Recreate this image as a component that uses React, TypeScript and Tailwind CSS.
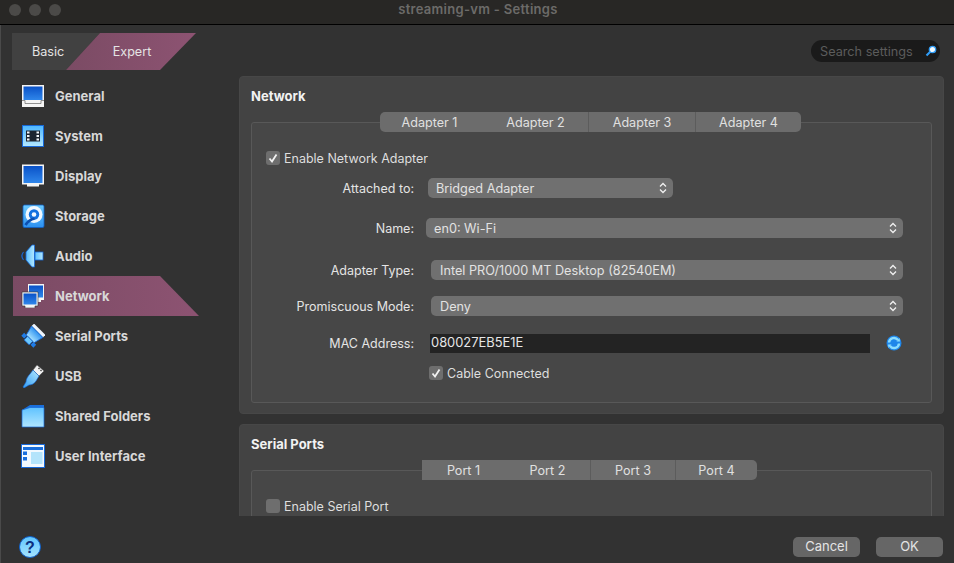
import type { ReactNode } from "react";

const font = { fontFamily: "Inter, 'Liberation Sans', sans-serif" };

function GeneralIcon() {
  return (
    <svg width="24" height="24" viewBox="0 0 24 24">
      <defs>
        <linearGradient id="scr" x1="0" y1="0" x2="0" y2="1">
          <stop offset="0" stopColor="#0a52c8" />
          <stop offset="1" stopColor="#2f86ea" />
        </linearGradient>
      </defs>
      <rect x="1" y="1" width="22" height="22" fill="#f4f4f4" />
      <rect x="2.500" y="2.500" width="19" height="13.500" fill="url(#scr)" />
      <path d="M1 16.500h3v3h16v-3h3" fill="none" stroke="#777" strokeWidth="0.8" />
    </svg>
  );
}

function SystemIcon() {
  return (
    <svg width="24" height="24" viewBox="0 0 24 24">
      <defs>
        <linearGradient id="sys" x1="0" y1="0" x2="0" y2="1">
          <stop offset="0" stopColor="#4cb6ff" />
          <stop offset="1" stopColor="#b4e8ff" />
        </linearGradient>
      </defs>
      <rect x="1.500" y="1.500" width="21" height="21" fill="url(#sys)" stroke="#1668d8" />
      <rect x="5" y="6.500" width="14" height="11" fill="#1c2430" />
      <path d="M6 7.500h2.500v2H6zM6 11h2.500v2H6zM6 14.500h2.500v2H6zM15.500 7.500H18v2h-2.500zM15.500 11H18v2h-2.500zM15.500 14.500H18v2h-2.500z" fill="#f2f6fa" />
    </svg>
  );
}

function DisplayIcon() {
  return (
    <svg width="24" height="24" viewBox="0 0 24 24">
      <path d="M1 0.500h22v20h-5v2H6v-2H1z" fill="#f4f4f4" />
      <rect x="2.500" y="2" width="19" height="17" fill="url(#scr)" />
    </svg>
  );
}

function StorageIcon() {
  return (
    <svg width="24" height="24" viewBox="0 0 24 24">
      <defs>
        <linearGradient id="sto" x1="0" y1="0" x2="0" y2="1">
          <stop offset="0" stopColor="#6ccbff" />
          <stop offset="1" stopColor="#2c90f0" />
        </linearGradient>
      </defs>
      <rect x="2" y="1" width="21" height="22.500" rx="1.500" fill="url(#sto)" stroke="#0f5fc8" strokeWidth="0.8" />
      <circle cx="13" cy="10.500" r="8.500" fill="#f0f8ff" />
      <circle cx="13" cy="10.500" r="5.200" fill="#1170e0" />
      <circle cx="13" cy="10.500" r="2.300" fill="#f0f8ff" />
      <path d="M4.500 21c2.500-4 5-5.500 9-6.500" fill="none" stroke="#0c4fb0" strokeWidth="2.800" />
    </svg>
  );
}

function AudioIcon() {
  return (
    <svg width="24" height="24" viewBox="0 0 24 24">
      <defs>
        <linearGradient id="aud" x1="0" y1="0" x2="1" y2="0">
          <stop offset="0" stopColor="#5cc0ff" />
          <stop offset="1" stopColor="#b4e8ff" />
        </linearGradient>
      </defs>
      <path d="M5 8l6-7h2.500v22H11l-6-7z" fill="url(#aud)" stroke="#1668d8" strokeWidth="0.8" />
      <rect x="14" y="8" width="8" height="8" fill="url(#aud)" stroke="#1668d8" strokeWidth="0.8" />
      <path d="M2.500 8c-2 2.500-2 5.500 0 8" fill="none" stroke="#1668d8" strokeWidth="1.200" />
    </svg>
  );
}

function NetworkIcon() {
  return (
    <svg width="24" height="24" viewBox="0 0 24 24">
      <path d="M7 0h16v16h-3v2H7z" fill="#f4f4f4" />
      <rect x="8" y="1.500" width="14" height="12" fill="url(#scr)" />
      <path d="M1 8h16v14h-3v2H4v-2H1z" fill="#f4f4f4" stroke="#333" strokeWidth="0.6" />
      <rect x="2.500" y="9.500" width="13" height="11" fill="url(#scr)" />
    </svg>
  );
}

function SerialIcon() {
  return (
    <svg width="24" height="24" viewBox="0 0 24 24">
      <defs>
        <linearGradient id="ser" x1="0" y1="0" x2="0" y2="1">
          <stop offset="0" stopColor="#2f92f0" />
          <stop offset="1" stopColor="#a8e2ff" />
        </linearGradient>
      </defs>
      <g transform="rotate(45 12 12)">
        <rect x="4" y="2.500" width="16" height="3.500" fill="#eef4fa" />
        <path d="M4 6h16l-2.500 10h-11z" fill="url(#ser)" stroke="#1668d8" strokeWidth="0.8" />
        <rect x="8.500" y="16" width="7" height="5" fill="#6cc8ff" stroke="#1668d8" strokeWidth="0.8" />
        <rect x="3.500" y="16" width="4" height="4" fill="#1f7ce8" />
        <rect x="16.500" y="16" width="4" height="4" fill="#1f7ce8" />
      </g>
    </svg>
  );
}

function UsbIcon() {
  return (
    <svg width="24" height="24" viewBox="0 0 24 24">
      <defs>
        <linearGradient id="usb" x1="0" y1="1" x2="1" y2="0">
          <stop offset="0" stopColor="#2f9cf5" />
          <stop offset="1" stopColor="#b4e8ff" />
        </linearGradient>
      </defs>
      <path d="M16 1l7 6-5 5-6-6z" fill="#f2f2f2" stroke="#555" strokeWidth="0.6" />
      <path d="M17.500 4l1 1M19.500 6l1 1" stroke="#333" strokeWidth="1.200" />
      <path d="M12 6l6 6-3 5c-2 3-5 4-7 4l-5 3-1-1 3-5c0-3 2-6 4-8z" fill="url(#usb)" stroke="#1668d8" strokeWidth="0.6" />
    </svg>
  );
}

function FolderIcon() {
  return (
    <svg width="24" height="24" viewBox="0 0 24 24">
      <defs>
        <linearGradient id="fol" x1="0" y1="0" x2="0" y2="1">
          <stop offset="0" stopColor="#5fc2ff" />
          <stop offset="1" stopColor="#b0e6ff" />
        </linearGradient>
      </defs>
      <path d="M1 6l8-5h14v5z" fill="#1a6fdc" />
      <path d="M1 6l8-2.500h14V23H1z" fill="url(#fol)" stroke="#1668d8" strokeWidth="0.7" />
    </svg>
  );
}

function InterfaceIcon() {
  return (
    <svg width="24" height="24" viewBox="0 0 24 24">
      <rect x="0.500" y="0.500" width="23" height="23" fill="#f2f9ff" stroke="#1668d8" />
      <rect x="2" y="3" width="20" height="3" fill="#1a6fdc" />
      <rect x="2" y="7.500" width="4" height="3.500" fill="#1a6fdc" />
      <rect x="2" y="13" width="4" height="3.500" fill="#1a6fdc" />
      <rect x="10" y="8" width="11.500" height="12" fill="#b4e4fb" />
    </svg>
  );
}

const sections: { name: string; icon: ReactNode; active?: boolean }[] = [
  { name: "General", icon: <GeneralIcon /> },
  { name: "System", icon: <SystemIcon /> },
  { name: "Display", icon: <DisplayIcon /> },
  { name: "Storage", icon: <StorageIcon /> },
  { name: "Audio", icon: <AudioIcon /> },
  { name: "Network", icon: <NetworkIcon />, active: true },
  { name: "Serial Ports", icon: <SerialIcon /> },
  { name: "USB", icon: <UsbIcon /> },
  { name: "Shared Folders", icon: <FolderIcon /> },
  { name: "User Interface", icon: <InterfaceIcon /> },
];

function Chevrons() {
  return (
    <svg width="8" height="12" viewBox="0 0 8 12" className="shrink-0" fill="none" stroke="#f0f0f0" strokeWidth="1.300">
      <path d="M1 4.500L4 1.500l3 3M1 7.500l3 3 3-3" />
    </svg>
  );
}

function Select({ value, className }: { value: string; className: string }) {
  return (
    <div className={`flex h-5 items-center justify-between rounded-[5px] bg-[#707070] pr-[6px] text-[12.7px] text-[#e2e2e2] ${className}`}>
      <span className="pt-[2px]">{value}</span>
      <Chevrons />
    </div>
  );
}

function Checkbox({ label, checked }: { label: string; checked?: boolean }) {
  return (
    <div className="flex h-5 items-center gap-[4px] text-[12.5px] text-[#dedede]">
      <span className="flex h-[14px] w-[14px] items-center justify-center rounded-[3px] bg-[#6e6e6e]">
        {checked && (
          <svg width="10" height="10" viewBox="0 0 10 10" fill="none" stroke="#f2f2f2" strokeWidth="1.800">
            <path d="M1.500 5.500L4 8.500 8.500 1.500" />
          </svg>
        )}
      </span>
      <span className="pt-[2px]">{label}</span>
    </div>
  );
}

function Tabs({ items, className }: { items: { name: string; width: string; sep?: boolean }[]; className: string }) {
  return (
    <div className={`relative z-10 flex h-5 rounded-[5px] bg-[#6c6c6c] text-[12.6px] text-[#e0e0e0] ${className}`}>
      {items.map((t) => (
        <div key={t.name} className={`flex items-center justify-center pt-[2px] ${t.width} ${t.sep ? "border-l border-[#5c5c5c]" : ""}`}>
          {t.name}
        </div>
      ))}
    </div>
  );
}

function Row({ label, className, children }: { label: string; className: string; children: ReactNode }) {
  return (
    <div className={`flex h-5 items-center ${className}`}>
      <div className="w-[162px] translate-y-[1px] text-right text-[12.5px] text-[#e4e4e4]">{label}</div>
      {children}
    </div>
  );
}

export default function App() {
  return (
    <div className="flex h-[563px] w-[954px] flex-col overflow-hidden bg-[#323232]" style={font}>
      {/* Title bar */}
      <div className="relative flex h-[25px] shrink-0 items-center justify-center border-b border-black bg-[#282725] pb-[5px] pl-[2px]">
        <div className="absolute top-[4px] left-[9px] flex gap-[8px]">
          <span className="h-3 w-3 rounded-full bg-[#4b4a48]" />
          <span className="h-3 w-3 rounded-full bg-[#4b4a48]" />
          <span className="h-3 w-3 rounded-full bg-[#4b4a48]" />
        </div>
        <span className="text-[13px] font-semibold tracking-[0.3px] text-[#6c6b69]">streaming-vm - Settings</span>
      </div>

      <div className="flex min-h-0 flex-1 border-l border-[#4a4a4a]">
        {/* Sidebar */}
        <div className="flex w-[238px] shrink-0 flex-col">
          <div className="mt-2 ml-[11px] flex h-[37px] text-[12.6px] text-[#e4e4e4]">
            <div className="flex w-[88px] items-center bg-[#414141] pt-[2px] pl-5 [clip-path:polygon(0_0,100%_0,54px_100%,0_100%)]">Basic</div>
            <div className="-ml-[34px] flex w-[130px] items-center justify-center bg-gradient-to-r from-[#7b4b64] to-[#8d5372] pt-[2px] pl-[2px] [clip-path:polygon(34px_0,100%_0,94px_100%,0_100%)]">
              Expert
            </div>
          </div>
          <div className="mt-[6px] flex flex-col">
            {sections.map((s) => (
              <div
                key={s.name}
                className={`ml-3 flex h-10 w-[186px] items-center gap-[10px] pl-2 text-[13px] font-bold text-[#d8d8d8] ${
                  s.active ? "bg-gradient-to-r from-[#7b4b64] to-[#8d5372] [clip-path:polygon(0_0,147px_0,100%_100%,0_100%)]" : ""
                }`}
              >
                {s.icon}
                <span className="translate-y-[1px]">{s.name}</span>
              </div>
            ))}
          </div>
          <div className="mt-auto mb-[5px] ml-[18px]">
            <svg width="22" height="22" viewBox="0 0 22 22">
              <defs>
                <linearGradient id="help" x1="0" y1="0" x2="0" y2="1">
                  <stop offset="0" stopColor="#5fc6ff" />
                  <stop offset="1" stopColor="#a6e4ff" />
                </linearGradient>
              </defs>
              <circle cx="11" cy="11" r="10.500" fill="url(#help)" stroke="#0f5fc8" />
              <text x="11" y="16.500" textAnchor="middle" fontSize="16" fontWeight="800" fill="#0c2f80" fontFamily="'Liberation Sans', sans-serif">
                ?
              </text>
            </svg>
          </div>
        </div>

        {/* Main column */}
        <div className="flex min-w-0 flex-1 flex-col">
          {/* Search */}
          <div className="mt-[15px] mr-[14px] flex h-[22px] w-[129px] items-center justify-between self-end rounded-full bg-[#1a1a1a] pr-[3px] pl-[9px] text-[12.7px] text-[#5c5c5c]">
            <span className="pt-[2px]">Search settings</span>
            <svg width="12" height="12" viewBox="0 0 12 12" fill="none">
              <circle cx="7.500" cy="4.500" r="3.200" fill="#f4fbff" stroke="#2f9cf5" strokeWidth="1.300" />
              <path d="M5 7L1.500 10.500" stroke="#2f9cf5" strokeWidth="2.200" />
            </svg>
          </div>

          {/* Scroll area */}
          <div className="mt-[14px] mr-[10px] flex h-[440px] flex-col gap-[10px] overflow-hidden">
            {/* Network */}
            <section className="h-[338px] shrink-0 rounded-[4px] border border-[#474747] bg-[#434343] px-[11px] pt-[9px]">
              <h2 className="h-5 text-[13px] leading-5 font-bold text-[#f2f2f2]">Network</h2>
              <Tabs
                className="mt-[6px] -mb-[10px] ml-[129px] w-[421px]"
                items={[
                  { name: "Adapter 1", width: "w-[99px]" },
                  { name: "Adapter 2", width: "w-[109px] pl-[4px]" },
                  { name: "Adapter 3", width: "w-[107px]", sep: true },
                  { name: "Adapter 4", width: "w-[106px]", sep: true },
                ]}
              />
              <div className="h-[281px] rounded-[3px] border border-[#585858] bg-[#474747]">
                <div className="mt-[25px] ml-[14px]">
                  <Checkbox label="Enable Network Adapter" checked />
                </div>
                <Row label="Attached to:" className="mt-[10px]">
                  <Select value="Bridged Adapter" className="ml-[14px] w-[245px] pl-2" />
                </Row>
                <Row label="Name:" className="mt-[20px]">
                  <Select value="en0: Wi-Fi" className="ml-[12px] w-[477px] pl-2" />
                </Row>
                <Row label="Adapter Type:" className="mt-[22px]">
                  <Select value="Intel PRO/1000 MT Desktop (82540EM)" className="ml-[17px] w-[472px] pl-[9px]" />
                </Row>
                <Row label="Promiscuous Mode:" className="mt-[16px]">
                  <Select value="Deny" className="ml-[17px] w-[472px] pl-[9px]" />
                </Row>
                <Row label="MAC Address:" className="mt-[17px]">
                  <div className="ml-[16px] flex h-[19px] w-[440px] items-center bg-[#232323] pl-px text-[12.9px] text-[#e6e6e6]">080027EB5E1E</div>
                  <svg width="16" height="16" viewBox="0 0 16 16" className="ml-4" fill="none">
                    <circle cx="8" cy="8" r="7.500" fill="#1f86ea" />
                    <path d="M3 7.500A5 5 0 0 1 12 5M13 8.500A5 5 0 0 1 4 11" stroke="#8adcff" strokeWidth="2.400" />
                    <path d="M10.500 6.500l3.500 0-.5-3.500zM5.500 9.500L2 9.500l.5 3.500z" fill="#8adcff" />
                  </svg>
                </Row>
                <div className="mt-[10px] ml-[177px]">
                  <Checkbox label="Cable Connected" checked />
                </div>
              </div>
            </section>

            {/* Serial Ports */}
            <section className="h-[200px] shrink-0 rounded-[4px] border border-[#474747] bg-[#434343] px-[11px] pt-[9px]">
              <h2 className="h-5 text-[13px] leading-5 font-bold text-[#f2f2f2]">Serial Ports</h2>
              <Tabs
                className="mt-[6px] -mb-[10px] ml-[171px] w-[335px] rounded-l-none"
                items={[
                  { name: "Port 1", width: "w-[83px]" },
                  { name: "Port 2", width: "w-[85px]" },
                  { name: "Port 3", width: "w-[85px]", sep: true },
                  { name: "Port 4", width: "w-[82px]", sep: true },
                ]}
              />
              <div className="h-[200px] rounded-[3px] border border-[#585858] bg-[#474747]">
                <div className="mt-[25px] ml-[14px]">
                  <Checkbox label="Enable Serial Port" />
                </div>
              </div>
            </section>
          </div>

          {/* Footer buttons */}
          <div className="mt-[21px] mr-[11px] flex justify-end gap-4 text-[13px] text-[#e4e4e4]">
            <button className="flex h-5 w-[67px] items-center justify-center rounded-[5px] bg-[#666666]">Cancel</button>
            <button className="flex h-5 w-[67px] items-center justify-center rounded-[5px] bg-[#666666]">OK</button>
          </div>
        </div>
      </div>
    </div>
  );
}
